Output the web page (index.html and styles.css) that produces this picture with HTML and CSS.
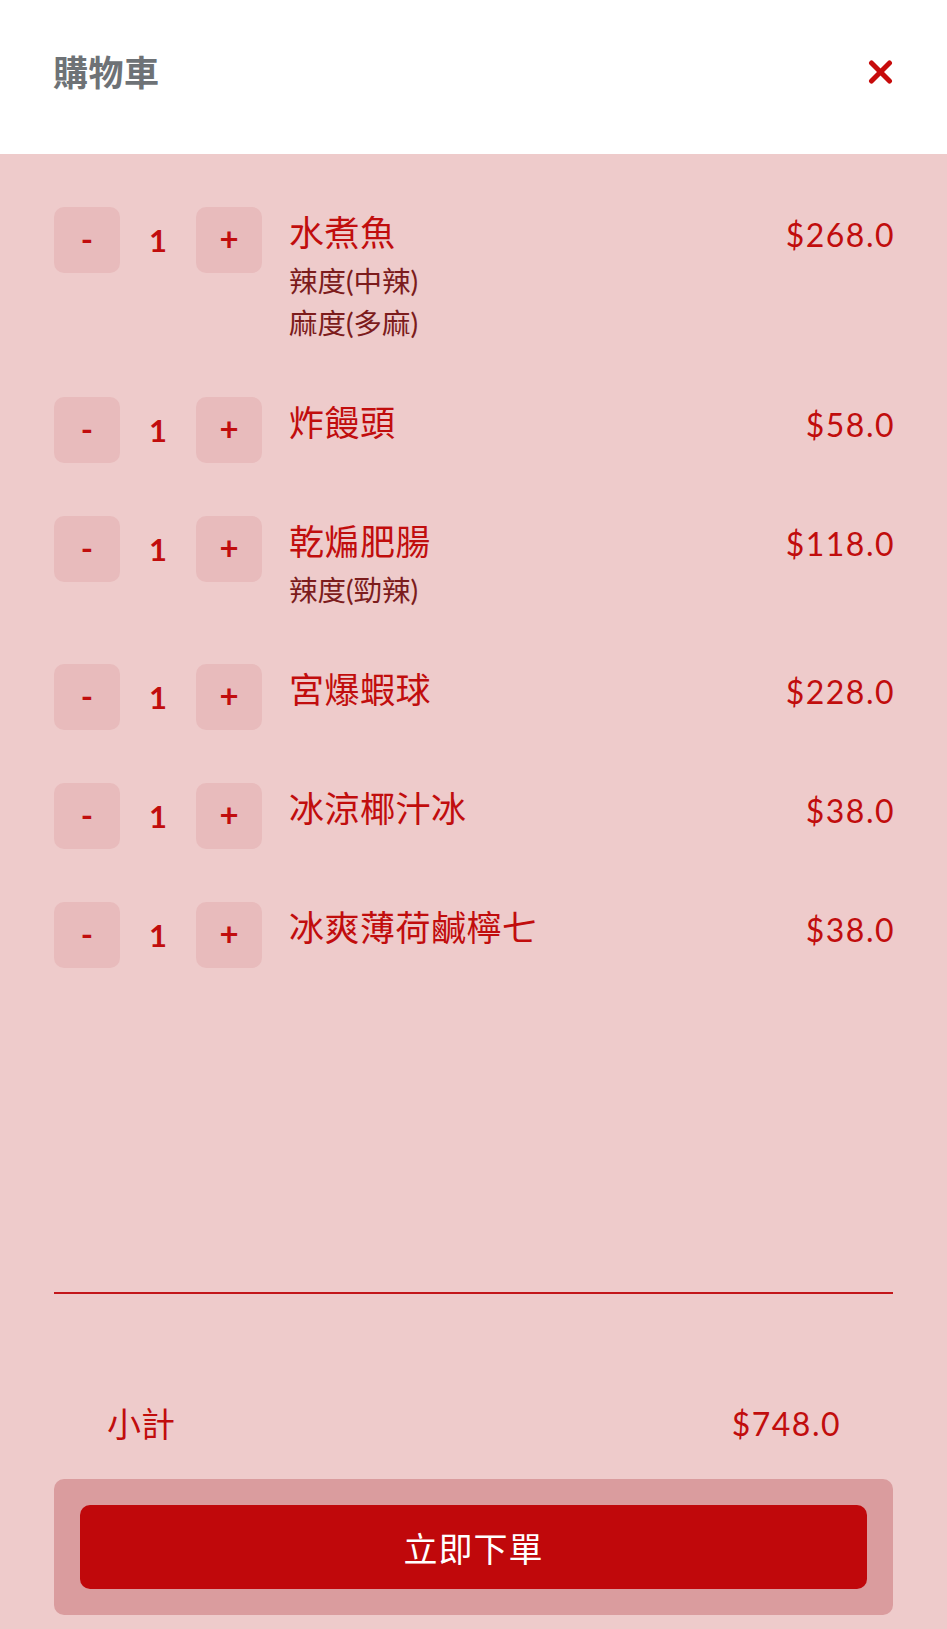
FILE: index.html
```html
<!DOCTYPE html>
<html>
	<head>
		<title>購物車</title>
		<meta charset="UTF-8">
		<link rel="stylesheet" href="styles.css">
	</head>
	<body>
		<div class="cart">
			<header class="cart_head">
				<h1 class="cart_title">購物車</h1>
				<button type="button" class="close_btn">
					<svg width="24" height="24" viewBox="0 0 24 24">
						<line x1="3" y1="3" x2="21" y2="21" />
						<line x1="21" y1="3" x2="3" y2="21" />
					</svg>
				</button>
			</header>

			<div class="cart_body">
				<ul class="item_list">
					<li class="item">
						<div class="qty">
							<button type="button" class="qty_btn">-</button>
							<span class="qty_num">1</span>
							<button type="button" class="qty_btn">+</button>
						</div>
						<div class="item_info">
							<div class="item_name">水煮魚</div>
							<div class="item_opt">辣度(中辣)</div>
							<div class="item_opt">麻度(多麻)</div>
						</div>
						<div class="item_price">$268.0</div>
					</li>
					<li class="item">
						<div class="qty">
							<button type="button" class="qty_btn">-</button>
							<span class="qty_num">1</span>
							<button type="button" class="qty_btn">+</button>
						</div>
						<div class="item_info">
							<div class="item_name">炸饅頭</div>
						</div>
						<div class="item_price">$58.0</div>
					</li>
					<li class="item">
						<div class="qty">
							<button type="button" class="qty_btn">-</button>
							<span class="qty_num">1</span>
							<button type="button" class="qty_btn">+</button>
						</div>
						<div class="item_info">
							<div class="item_name">乾煸肥腸</div>
							<div class="item_opt">辣度(勁辣)</div>
						</div>
						<div class="item_price">$118.0</div>
					</li>
					<li class="item">
						<div class="qty">
							<button type="button" class="qty_btn">-</button>
							<span class="qty_num">1</span>
							<button type="button" class="qty_btn">+</button>
						</div>
						<div class="item_info">
							<div class="item_name">宮爆蝦球</div>
						</div>
						<div class="item_price">$228.0</div>
					</li>
					<li class="item">
						<div class="qty">
							<button type="button" class="qty_btn">-</button>
							<span class="qty_num">1</span>
							<button type="button" class="qty_btn">+</button>
						</div>
						<div class="item_info">
							<div class="item_name">冰涼椰汁冰</div>
						</div>
						<div class="item_price">$38.0</div>
					</li>
					<li class="item">
						<div class="qty">
							<button type="button" class="qty_btn">-</button>
							<span class="qty_num">1</span>
							<button type="button" class="qty_btn">+</button>
						</div>
						<div class="item_info">
							<div class="item_name">冰爽薄荷鹹檸七</div>
						</div>
						<div class="item_price">$38.0</div>
					</li>
				</ul>
			</div>

			<footer class="cart_foot">
				<div class="subtotal">
					<span>小計</span>
					<span class="subtotal_num">$748.0</span>
				</div>
				<div class="order_box">
					<button type="button" class="order_btn">立即下單</button>
				</div>
			</footer>
		</div>
	</body>
</html>
```

FILE: styles.css
```css
html, body {
	height: 100%;
}
body {
	margin: 0;
	background-color: #eecbcb;
	font-family: "Lato", "Noto Sans CJK TC", sans-serif;
	color: #c10d0d;
}
button {
	font-family: inherit;
	border: none;
	cursor: pointer;
}

.cart {
	min-height: 100%;
	display: flex;
	flex-direction: column;
}

.cart_head {
	height: 154px;
	box-sizing: border-box;
	background-color: #fff;
	display: flex;
	align-items: center;
	justify-content: space-between;
	padding: 0 54px 10px 53px;
}
.cart_title {
	margin: 0;
	font-size: 35px;
	font-weight: 700;
	color: #6e7276;
	line-height: 40px;
	letter-spacing: 0.5px;
}
.close_btn {
	background: none;
	padding: 0;
	display: flex;
}
.close_btn svg {
	width: 25px;
	height: 24px;
}
.close_btn line {
	stroke: #c70b0b;
	stroke-width: 5;
	stroke-linecap: round;
}

.cart_body {
	flex: 1;
	padding: 53px 54px 0;
}
.item_list {
	list-style: none;
	margin: 0;
	padding: 0;
}
.item {
	display: flex;
	align-items: flex-start;
	margin-bottom: 53px;
}
.qty {
	display: flex;
	align-items: center;
}
.qty_btn {
	width: 66px;
	height: 66px;
	border-radius: 10px;
	background-color: #e8bbbc;
	color: #c10d0d;
	font-size: 33px;
	font-weight: 700;
	padding: 0 0 4px;
}
.qty_num {
	width: 76px;
	text-align: center;
	font-size: 31px;
	font-weight: 700;
}
.item_info {
	flex: 1;
	margin-left: 27px;
}
.item_name {
	font-size: 35px;
	letter-spacing: 0.5px;
	line-height: 55px;
	margin-top: -2px;
}
.item_opt {
	font-size: 28.5px;
	line-height: 42px;
	color: #7c1c1c;
}
.item_price {
	font-size: 32px;
	letter-spacing: 1.5px;
	line-height: 55px;
	margin-right: -2px;
}

.cart_foot {
	margin: 0 54px;
	border-top: 2px solid #c3161a;
	padding-bottom: 14px;
}
.subtotal {
	display: flex;
	justify-content: space-between;
	align-items: center;
	margin: 106px 54px 31px 53px;
	font-size: 34px;
	line-height: 48px;
}
.subtotal_num {
	font-size: 32px;
	letter-spacing: 1.5px;
	margin-right: -2px;
}
.order_box {
	background-color: #da9c9e;
	border-radius: 10px;
	padding: 26px;
}
.order_btn {
	display: block;
	width: 100%;
	height: 84px;
	border-radius: 10px;
	background-color: #c0080b;
	color: #fff;
	font-size: 34px;
	letter-spacing: 1px;
}
```
